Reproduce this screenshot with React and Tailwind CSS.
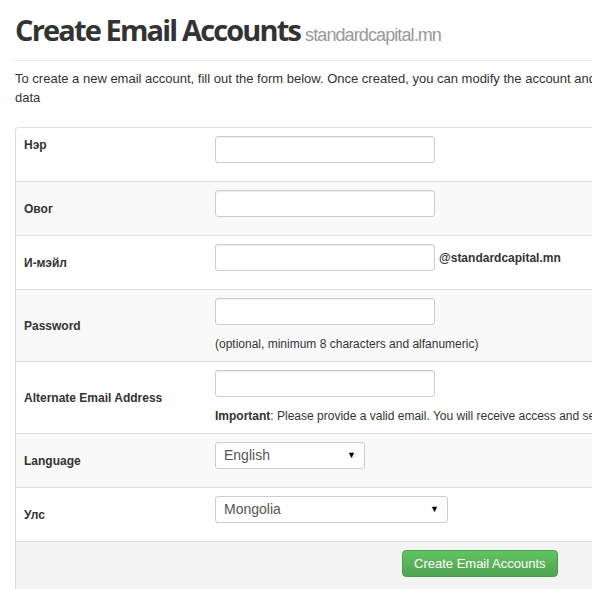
import React from 'react';

const rows = [
  { label: 'Нэр', kind: 'input', top: true },
  { label: 'Овог', kind: 'input' },
  { label: 'И-мэйл', kind: 'email' },
  { label: 'Password', kind: 'input', help: '(optional, minimum 8 characters and alfanumeric)' },
  { label: 'Alternate Email Address', kind: 'input', important: true },
  { label: 'Language', kind: 'select', value: 'English', w: 'w-[150px]' },
  { label: 'Улс', kind: 'select', value: 'Mongolia', w: 'w-[233px]' },
];

function TextInput() {
  return <input type="text" className="block h-[27px] w-[220px] rounded-[3px] border border-[#ccc] bg-white px-2 shadow-[inset_0_1px_1px_rgba(0,0,0,0.075)] outline-none" />;
}

function Select({ value, w }) {
  return (
    <div className={`flex h-[27px] ${w} items-center justify-between rounded-[3px] border border-[#ccc] bg-white pl-2 pr-2 text-[14px] text-[#555]`}>
      <span>{value}</span>
      <span className="text-[9px] text-black">▼</span>
    </div>
  );
}

export default function App() {
  return (
    <div className="h-[589px] w-[592px] overflow-hidden bg-white font-['Liberation_Sans',Arial,sans-serif] text-[#333]">
      <div className="w-[960px] pl-[15px]">
        <div className="flex items-baseline gap-[5px] pt-[12px] pb-[11px] border-b border-[#e5e5e5]">
          <h1 className="font-['Open_Sans',sans-serif] text-[29px] font-bold leading-[36px] tracking-[-1.85px] text-[#333]">Create Email Accounts</h1>
          <span className="text-[18px] tracking-[-0.9px] text-[#999]">standardcapital.mn</span>
        </div>

        <p className="mt-[8px] text-[13px] leading-[19px]">
          To create a new email account, fill out the form below. Once created, you can modify the account and configure additional settings from the
          <br />
          data
        </p>

        <div className="mt-[20px] overflow-hidden rounded-tl-[4px] border-l border-t border-[#ddd]">
          {rows.map((r, i) => (
            <div key={r.label} className={`flex ${i > 0 ? 'border-t border-[#ddd]' : ''} ${i % 2 ? 'bg-[#f9f9f9]' : 'bg-white'}`}>
              <div className={`flex w-[199px] shrink-0 px-[8px] py-[8px] text-[12px] font-bold leading-[18px] ${r.top ? 'items-start' : 'items-center'}`}>
                {r.label}
              </div>
              <div className="pt-[8px] pb-[8px]">
                <div className="mb-[10px] flex items-center">
                  {r.kind === 'select' ? <Select value={r.value} w={r.w} /> : <TextInput />}
                  {r.kind === 'email' && <span className="ml-[4px] text-[12px] font-bold">@standardcapital.mn</span>}
                </div>
                {r.help && <div className="text-[12px] leading-[18px]">{r.help}</div>}
                {r.important && (
                  <div className="whitespace-nowrap text-[12px] leading-[18px]">
                    <b>Important</b>: Please provide a valid email. You will receive access and setup information at this address.
                  </div>
                )}
              </div>
            </div>
          ))}
          <div className="flex h-[60px] border-t border-[#ddd] bg-[#f3f3f3] pt-[8px] pl-[386px]">
            <button className="h-[27px] rounded-[4px] border border-[#4a9a4a] bg-gradient-to-b from-[#62c462] to-[#51a351] px-[11px] text-[13px] text-white">
              Create Email Accounts
            </button>
          </div>
        </div>
      </div>
    </div>
  );
}
